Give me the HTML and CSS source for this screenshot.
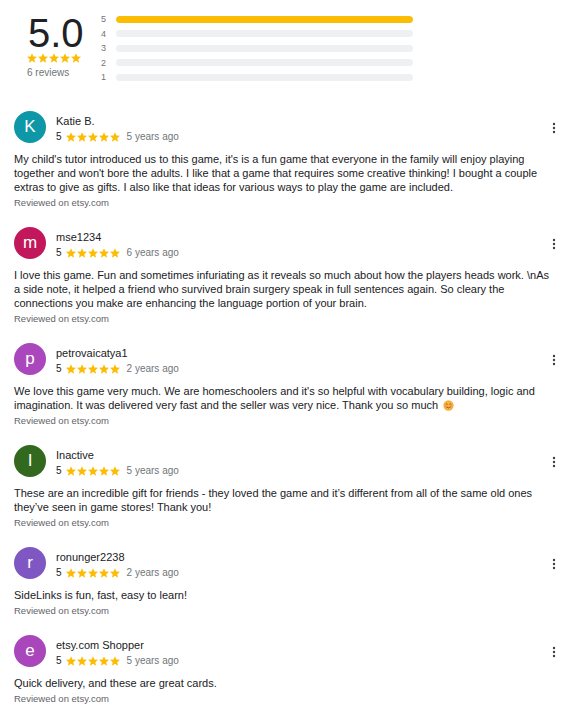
FILE: index.html
```html
<!DOCTYPE html>
<html>
<head>
<meta charset="utf-8">
<link rel="stylesheet" href="styles.css">
</head>
<body>
<svg class="defs" width="0" height="0" aria-hidden="true">
  <symbol id="star" viewBox="2 2 20 19.3"><path d="M12 17.27L18.18 21l-1.64-7.03L22 9.24l-7.19-.61L12 2 9.19 8.63 2 9.24l5.46 4.73L5.82 21z"/></symbol>
  <symbol id="kebab" viewBox="0 0 4 12"><circle cx="2" cy="2" r="1.2"/><circle cx="2" cy="6" r="1.2"/><circle cx="2" cy="10" r="1.2"/></symbol>
</svg>

<main class="page">
  <section class="summary">
    <div class="score">
      <div class="score-num">5.0</div>
      <svg class="stars" viewBox="0 0 54 10"><use href="#star" x="0" width="10" height="10"/><use href="#star" x="11" width="10" height="10"/><use href="#star" x="22" width="10" height="10"/><use href="#star" x="33" width="10" height="10"/><use href="#star" x="44" width="10" height="10"/></svg>
      <div class="score-count">6 reviews</div>
    </div>
    <div class="histogram">
      <div class="hist-row"><span class="hist-label">5</span><span class="hist-bar"><span class="hist-fill" style="width:100%"></span></span></div>
      <div class="hist-row"><span class="hist-label">4</span><span class="hist-bar"><span class="hist-fill" style="width:0%"></span></span></div>
      <div class="hist-row"><span class="hist-label">3</span><span class="hist-bar"><span class="hist-fill" style="width:0%"></span></span></div>
      <div class="hist-row"><span class="hist-label">2</span><span class="hist-bar"><span class="hist-fill" style="width:0%"></span></span></div>
      <div class="hist-row"><span class="hist-label">1</span><span class="hist-bar"><span class="hist-fill" style="width:0%"></span></span></div>
    </div>
  </section>

  <section class="reviews">
    <article class="review">
      <header class="review-head">
        <div class="avatar av-teal">K</div>
        <div class="meta">
          <div class="name">Katie B.</div>
          <div class="rating"><span class="rating-num">5</span><svg class="stars" viewBox="0 0 54 10"><use href="#star" x="0" width="10" height="10"/><use href="#star" x="11" width="10" height="10"/><use href="#star" x="22" width="10" height="10"/><use href="#star" x="33" width="10" height="10"/><use href="#star" x="44" width="10" height="10"/></svg><span class="date">5 years ago</span></div>
        </div>
        <svg class="kebab"><use href="#kebab"/></svg>
      </header>
      <p class="text">My child's tutor introduced us to this game, it's is a fun game that everyone in the family will enjoy playing together and won't bore the adults. I like that a game that requires some creative thinking! I bought a couple extras to give as gifts. I also like that ideas for various ways to play the game are included.</p>
      <div class="source">Reviewed on etsy.com</div>
    </article>

    <article class="review">
      <header class="review-head">
        <div class="avatar av-crimson">m</div>
        <div class="meta">
          <div class="name">mse1234</div>
          <div class="rating"><span class="rating-num">5</span><svg class="stars" viewBox="0 0 54 10"><use href="#star" x="0" width="10" height="10"/><use href="#star" x="11" width="10" height="10"/><use href="#star" x="22" width="10" height="10"/><use href="#star" x="33" width="10" height="10"/><use href="#star" x="44" width="10" height="10"/></svg><span class="date">6 years ago</span></div>
        </div>
        <svg class="kebab"><use href="#kebab"/></svg>
      </header>
      <p class="text">I love this game. Fun and sometimes infuriating as it reveals so much about how the players heads work. \nAs a side note, it helped a friend who survived brain surgery speak in full sentences again. So cleary the connections you make are enhancing the language portion of your brain.</p>
      <div class="source">Reviewed on etsy.com</div>
    </article>

    <article class="review">
      <header class="review-head">
        <div class="avatar av-purple">p</div>
        <div class="meta">
          <div class="name">petrovaicatya1</div>
          <div class="rating"><span class="rating-num">5</span><svg class="stars" viewBox="0 0 54 10"><use href="#star" x="0" width="10" height="10"/><use href="#star" x="11" width="10" height="10"/><use href="#star" x="22" width="10" height="10"/><use href="#star" x="33" width="10" height="10"/><use href="#star" x="44" width="10" height="10"/></svg><span class="date">2 years ago</span></div>
        </div>
        <svg class="kebab"><use href="#kebab"/></svg>
      </header>
      <p class="text">We love this game very much. We are homeschoolers and it's so helpful with vocabulary building, logic and imagination. It was delivered very fast and the seller was very nice. Thank you so much <svg class="emoji" viewBox="0 0 12 12"><circle cx="6" cy="6" r="5.6" fill="#f7b23b"/><circle cx="3" cy="7" r="1.1" fill="#f28c7a"/><circle cx="9" cy="7" r="1.1" fill="#f28c7a"/><path d="M3 4.8q1-1 2 0M7 4.8q1-1 2 0" fill="none" stroke="#7a3f12" stroke-width=".8"/><path d="M3.8 7.6q2.2 2 4.4 0" fill="none" stroke="#7a3f12" stroke-width=".8"/></svg></p>
      <div class="source">Reviewed on etsy.com</div>
    </article>

    <article class="review">
      <header class="review-head">
        <div class="avatar av-green">I</div>
        <div class="meta">
          <div class="name">Inactive</div>
          <div class="rating"><span class="rating-num">5</span><svg class="stars" viewBox="0 0 54 10"><use href="#star" x="0" width="10" height="10"/><use href="#star" x="11" width="10" height="10"/><use href="#star" x="22" width="10" height="10"/><use href="#star" x="33" width="10" height="10"/><use href="#star" x="44" width="10" height="10"/></svg><span class="date">5 years ago</span></div>
        </div>
        <svg class="kebab"><use href="#kebab"/></svg>
      </header>
      <p class="text">These are an incredible gift for friends - they loved the game and it’s different from all of the same old ones they’ve seen in game stores! Thank you!</p>
      <div class="source">Reviewed on etsy.com</div>
    </article>

    <article class="review">
      <header class="review-head">
        <div class="avatar av-violet">r</div>
        <div class="meta">
          <div class="name">ronunger2238</div>
          <div class="rating"><span class="rating-num">5</span><svg class="stars" viewBox="0 0 54 10"><use href="#star" x="0" width="10" height="10"/><use href="#star" x="11" width="10" height="10"/><use href="#star" x="22" width="10" height="10"/><use href="#star" x="33" width="10" height="10"/><use href="#star" x="44" width="10" height="10"/></svg><span class="date">2 years ago</span></div>
        </div>
        <svg class="kebab"><use href="#kebab"/></svg>
      </header>
      <p class="text">SideLinks is fun, fast, easy to learn!</p>
      <div class="source">Reviewed on etsy.com</div>
    </article>

    <article class="review">
      <header class="review-head">
        <div class="avatar av-orchid">e</div>
        <div class="meta">
          <div class="name">etsy.com Shopper</div>
          <div class="rating"><span class="rating-num">5</span><svg class="stars" viewBox="0 0 54 10"><use href="#star" x="0" width="10" height="10"/><use href="#star" x="11" width="10" height="10"/><use href="#star" x="22" width="10" height="10"/><use href="#star" x="33" width="10" height="10"/><use href="#star" x="44" width="10" height="10"/></svg><span class="date">5 years ago</span></div>
        </div>
        <svg class="kebab"><use href="#kebab"/></svg>
      </header>
      <p class="text">Quick delivery, and these are great cards.</p>
      <div class="source">Reviewed on etsy.com</div>
    </article>
  </section>
</main>
</body>
</html>
```

FILE: styles.css
```css
* { box-sizing: border-box; }

html, body {
  margin: 0;
  padding: 0;
  background: #ffffff;
}

body {
  font-family: "Liberation Sans", Arial, sans-serif;
  color: #202124;
}

.defs {
  position: absolute;
  width: 0;
  height: 0;
  overflow: hidden;
}

.page {
  width: 567px;
  padding: 12px 11px 0 14px;
}

/* ---------- summary ---------- */
.summary {
  display: flex;
  align-items: flex-start;
}

.score {
  display: flex;
  flex-direction: column;
  align-items: flex-start;
  margin-left: 13px;
  margin-top: 1px;
  width: 74px;
}

.score-num {
  font-size: 40px;
  line-height: 40px;
  color: #202124;
  margin-left: 1px;
}

.stars {
  display: block;
  width: 54px;
  height: 10px;
  fill: #fbbc04;
}

.score-count {
  margin-top: 3px;
  font-size: 10px;
  line-height: 14px;
  color: #70757a;
}

.histogram {
  display: flex;
  flex-direction: column;
  width: 312px;
}

.hist-row {
  display: flex;
  align-items: center;
  height: 14.5px;
}

.hist-label {
  width: 15px;
  font-size: 9px;
  color: #70757a;
}

.hist-bar {
  flex: 1;
  height: 7px;
  border-radius: 4px;
  background: #eff0f2;
  overflow: hidden;
}

.hist-fill {
  display: block;
  height: 100%;
  background: #fbbc04;
  border-radius: 4px;
}

/* ---------- reviews ---------- */
.reviews {
  margin-top: 26px;
  display: flex;
  flex-direction: column;
  gap: 17px;
}

.review-head {
  display: flex;
  align-items: center;
  height: 32px;
}

.avatar {
  width: 32px;
  height: 32px;
  border-radius: 50%;
  display: flex;
  align-items: center;
  justify-content: center;
  color: #ffffff;
  font-size: 17px;
  line-height: 1;
  flex-shrink: 0;
}

.av-teal { background: #0d97a7; }
.av-crimson { background: #c2185b; }
.av-purple { background: #ab47bc; }
.av-green { background: #33691e; }
.av-violet { background: #7e57c2; }
.av-orchid { background: #aa46bb; }

.meta {
  flex: 1;
  margin-left: 10px;
  display: flex;
  flex-direction: column;
  padding-top: 3px;
  align-self: flex-start;
}

.name {
  font-size: 11px;
  line-height: 14px;
  color: #202124;
}

.rating {
  margin-top: 2px;
  display: flex;
  align-items: center;
  height: 14px;
  font-size: 10px;
  color: #202124;
}

.rating-num {
  margin-right: 4px;
}

.rating .stars {
  width: 54px;
}

.date {
  margin-left: 7px;
  color: #70757a;
}

.kebab {
  width: 4px;
  height: 12px;
  fill: #3c4043;
  margin-right: 0;
  margin-top: 3px;
}

.text {
  margin: 9px 0 0 0;
  padding-right: 4px;
  font-size: 11px;
  line-height: 14px;
  color: #202124;
}

.emoji {
  width: 11px;
  height: 11px;
  vertical-align: -2px;
  margin-left: 2px;
}

.source {
  margin-top: 2px;
  font-size: 9.5px;
  line-height: 14px;
  color: #5f6368;
}
```
